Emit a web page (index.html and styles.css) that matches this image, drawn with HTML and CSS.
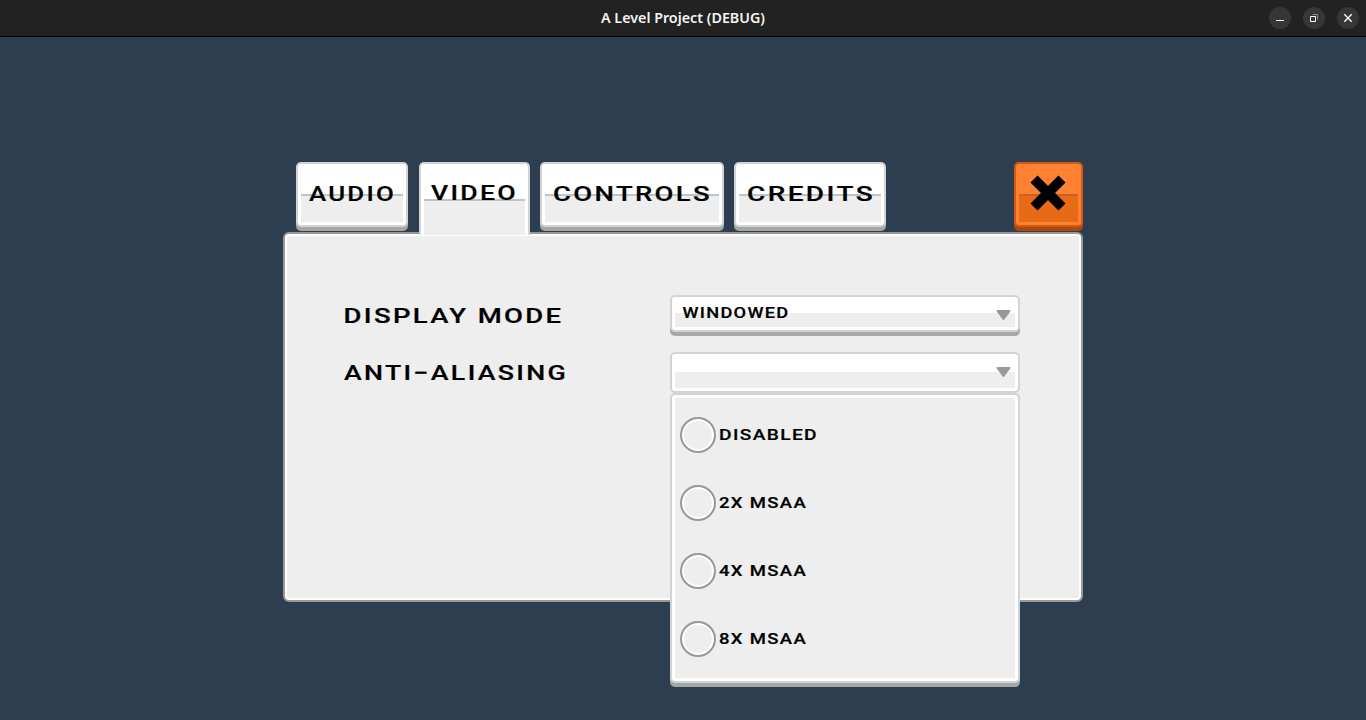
FILE: index.html
```html
<!DOCTYPE html>
<html lang="en">
<head>
<meta charset="utf-8">
<title>A Level Project (DEBUG)</title>
<link rel="stylesheet" href="styles.css">
</head>
<body>
<header class="titlebar">
  <svg class="window-title" width="164" height="20"><text x="0" y="15" textLength="164" lengthAdjust="spacingAndGlyphs">A Level Project (DEBUG)</text></svg>
  <div class="window-buttons">
    <span class="window-button"><svg width="22" height="22"><path d="M7 13.500h8" stroke="#fff" fill="none"/></svg></span>
    <span class="window-button"><svg width="22" height="22"><path d="M9.500 7.500h5v5" stroke="#8c8c8c" fill="none"/><path d="M7.500 9.500h5v5h-5z" stroke="#fff" fill="none"/></svg></span>
    <span class="window-button"><svg width="22" height="22"><path d="M7.300 7.300l7.400 7.400M14.700 7.300l-7.400 7.400" stroke="#fff" stroke-width="1.400"/></svg></span>
  </div>
</header>
<main class="settings">
  <nav class="tabs">
    <div class="tab audio"><svg class="label" width="85" height="15"><text x="-1" y="15" textLength="87" lengthAdjust="spacingAndGlyphs">AUDIO</text></svg></div>
    <div class="tab video"><svg class="label" width="85" height="15"><text x="-1" y="15" textLength="87" lengthAdjust="spacingAndGlyphs">VIDEO</text></svg></div>
    <div class="tab controls"><svg class="label" width="156" height="15"><text x="-1" y="15" textLength="159" lengthAdjust="spacingAndGlyphs">CONTROLS</text></svg></div>
    <div class="tab credits"><svg class="label" width="125" height="15"><text x="-1" y="15" textLength="128" lengthAdjust="spacingAndGlyphs">CREDITS</text></svg></div>
    <div class="tab close"><svg width="38" height="38"><path d="M4 4L32 32M32 4L4 32" stroke="#000" stroke-width="10"/></svg></div>
  </nav>
  <section class="panel">
    <div class="row">
      <svg class="label" width="217" height="15"><text x="-1.500" y="15" textLength="220" lengthAdjust="spacingAndGlyphs">DISPLAY MODE</text></svg>
      <div class="select">
        <svg class="label small" width="105" height="10"><text x="-.5" y="10" textLength="107" lengthAdjust="spacingAndGlyphs">WINDOWED</text></svg>
        <svg class="arrow" width="15" height="10"><path d="M1.500 1h12L7.500 9z"/></svg>
      </div>
    </div>
    <div class="row">
      <svg class="label" width="221" height="15"><text x="-1" y="15" textLength="224" lengthAdjust="spacingAndGlyphs">ANTI<tspan class="dash">−</tspan>ALIASING</text></svg>
      <div class="select open">
        <svg class="arrow" width="15" height="10"><path d="M1.500 1h12L7.500 9z"/></svg>
        <div class="menu">
          <div class="option"><i class="radio"></i><svg class="label small" width="97" height="10"><text x="-1" y="10" textLength="99" lengthAdjust="spacingAndGlyphs">DISABLED</text></svg></div>
          <div class="option"><i class="radio"></i><svg class="label small" width="86" height="10"><text x="-1" y="10" textLength="88" lengthAdjust="spacingAndGlyphs">2X MSAA</text></svg></div>
          <div class="option"><i class="radio"></i><svg class="label small" width="86" height="10"><text x="-1" y="10" textLength="88" lengthAdjust="spacingAndGlyphs">4X MSAA</text></svg></div>
          <div class="option"><i class="radio"></i><svg class="label small" width="86" height="10"><text x="-1" y="10" textLength="88" lengthAdjust="spacingAndGlyphs">8X MSAA</text></svg></div>
        </div>
      </div>
    </div>
  </section>
</main>
</body>
</html>
```
FILE: styles.css
```css
* { box-sizing: border-box; }
body { margin: 0; height: 720px; overflow: hidden; background: #2d3e50; font-family: Roboto, sans-serif; }
svg { display: block; flex: none; }
.titlebar { height: 37px; background: #222; border-bottom: 1px solid #000; display: grid; grid-template-columns: 1fr 164px 1fr; align-items: center; }
.window-title { grid-column: 2; font: 600 14px "Noto Sans", sans-serif; fill: #f4f4f4; }
.window-buttons { display: flex; justify-content: flex-end; gap: 12px; padding-right: 7px; }
.window-button { width: 22px; height: 22px; border-radius: 50%; background: #373737; }
.settings { width: 800px; margin: 125px auto 0; }
.label { overflow: visible; font: 500 21px Roboto, sans-serif; letter-spacing: 1.8px; fill: #000; stroke: #000; stroke-width: .2px; }
.label.small { font-size: 14px; letter-spacing: 1px; }
.tabs { height: 70px; padding-left: 13px; display: flex; align-items: flex-start; }
.tab { height: 65px; border: 2px solid #d3d3d3; border-radius: 5px; padding: 3px; display: flex; justify-content: center; background: linear-gradient(#fff 27px, #bdc3c7 27px, #bdc3c7 29px, #eee 29px) content-box, #fff; box-shadow: 0 4px 0 #a5a7a7; }
.tab .label { margin-top: 19px; }
.audio { width: 112px; }
.tab.video { width: 111px; height: 73px; margin: 0 10px 0 11px; border-bottom: 0; border-radius: 5px 5px 0 0; padding-bottom: 0; box-shadow: none; position: relative; z-index: 1; background: linear-gradient(#fff 32px, #bdc3c7 32px, #bdc3c7 34px, #eee 34px) content-box, #fff; }
.tab.video .label { margin-top: 18px; }
.controls { width: 184px; margin-right: 10px; }
.credits { width: 152px; }
.tab.close { width: 69px; margin-left: auto; border-color: #d35810; background: linear-gradient(#ff8232 27px, #c46228 27px, #c46228 29px, #e86a17 29px) content-box, #ff8232; box-shadow: 0 4px 0 #aa4a0f; }
.close svg { margin-top: 8px; }
.panel { height: 370px; border: 2px solid #999; border-radius: 6px; box-shadow: inset 0 0 0 2px #fff; background: #eee; padding: 61px 61px 0 60px; display: flex; flex-direction: column; gap: 16px; }
.row { height: 41px; display: flex; justify-content: space-between; align-items: flex-start; }
.row > .label { margin-top: 13px; }
.select { position: relative; width: 350px; height: 37px; border: 2px solid #d3d3d3; border-radius: 5px; padding: 3px; background: linear-gradient(#fff 13px, #eee 13px) content-box, #fff; box-shadow: 0 4px 0 #a8a8a8; display: flex; }
.select > .label { margin: 8px 0 0 8px; }
.arrow { margin: 10px 4px 0 auto; fill: #999; stroke: #999; stroke-width: 2px; stroke-linejoin: round; }
.open { height: 41px; background: linear-gradient(#fff 15px, #eee 15px) content-box, #fff; box-shadow: none; }
.menu { position: absolute; top: 39px; left: -2px; width: 350px; height: 290px; border: 2px solid #d3d3d3; border-radius: 5px; padding: 19px 3px 0 8px; background: #eee; box-shadow: inset 0 0 0 3px #fff, 0 4px 0 #a5a7a7; }
.option { height: 68px; padding-top: 3px; display: flex; align-items: flex-start; gap: 4px; }
.option .label { margin-top: 13px; }
.radio { width: 36px; height: 36px; border: 2px solid #999; border-radius: 50%; box-shadow: inset 0 0 0 2px #fff; }
```
